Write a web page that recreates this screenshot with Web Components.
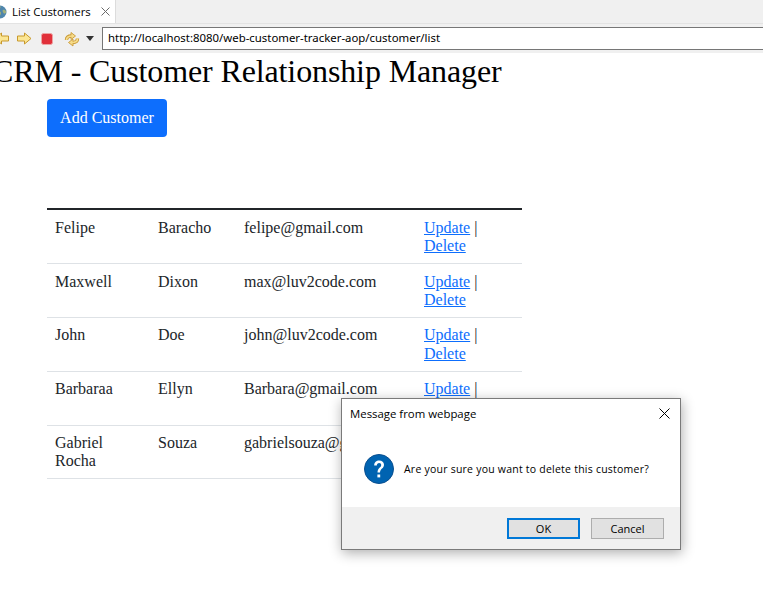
<!DOCTYPE html>
<html>
<head>
<meta charset="utf-8">
<title>List Customers</title>
<style>
    html, body { margin: 0; height: 100%; background: #fff; overflow: hidden; }
    body { font-family: "Liberation Serif", serif; color: #212529; }
</style>
</head>
<body>
<browser-bar url="http://localhost:8080/web-customer-tracker-aop/customer/list" tab="List Customers"></browser-bar>
<crm-page>
    <customer-table>
        <customer-row first="Felipe" last="Baracho" email="felipe@gmail.com"></customer-row>
        <customer-row first="Maxwell" last="Dixon" email="max@luv2code.com"></customer-row>
        <customer-row first="John" last="Doe" email="john@luv2code.com"></customer-row>
        <customer-row first="Barbaraa" last="Ellyn" email="Barbara@gmail.com"></customer-row>
        <customer-row first="Gabriel Rocha" last="Souza" email="gabrielsouza@gmail.com"></customer-row>
    </customer-table>
</crm-page>
<confirm-dialog title="Message from webpage" message="Are your sure you want to delete this customer?"></confirm-dialog>

<script>
(function () {
    const ARROW = "M.5 4h7V1l6.500 5.500-6.500 5.500V9h-7z";

    class BrowserBar extends HTMLElement {
        constructor() {
            super();
            const root = this.attachShadow({ mode: "open" });
            root.innerHTML = `
                <style>
                    :host { display: block; height: 53px; background: #f0f0f0; font-family: "Open Sans", "Noto Sans", sans-serif; color: #000; overflow: hidden; }
                    .tabs { display: flex; height: 24px; border-bottom: 1px solid #e3e3e3; box-sizing: border-box; }
                    .tab { width: 116px; flex: none; background: #fff; border-right: 1px solid #dcdcdc; box-sizing: border-box; display: flex; align-items: center; font-size: 11.4px; white-space: nowrap; }
                    .globe { flex: none; margin: 1px 5px 0 -7px; }
                    .close { flex: none; margin-left: 10px; }
                    .tools { display: flex; align-items: center; height: 29px; }
                    .icons { width: 102px; flex: none; display: flex; align-items: center; }
                    .icons svg { flex: none; }
                    .url { flex: 1; height: 23px; box-sizing: border-box; background: #fff; border: 1px solid #767676; border-right: 0; font-size: 11.4px; line-height: 20px; padding-left: 5px; font-family: "Noto Sans", sans-serif; white-space: nowrap; }
                </style>
                <div class="tabs">
                    <div class="tab">
                        <svg class="globe" width="14" height="14" viewBox="0 0 14 14"><circle cx="7" cy="7" r="6.500" fill="#4f86ad"/><path d="M2.500 3C4 1 6.500.8 7.500 1.500S6 3.500 5.500 5s2.500 1 2.500 3-1.500 3-2.500 3.500S3 10 3 8 1.500 4.500 2.500 3zM10 5c1-.5 2.500 0 3 1.500s-1 2.500-2 2-2-3-1-3.500z" fill="#a3b17a"/></svg>
                        <span class="label"></span>
                        <svg class="close" width="9" height="9" viewBox="0 0 9 9"><path d="M.5.5l8 8M8.500.5l-8 8" stroke="#6a6a6a" fill="none"/></svg>
                    </div>
                </div>
                <div class="tools">
                    <div class="icons">
                        <svg width="15" height="13" viewBox="0 0 15 13" style="margin-left:-6px;transform:scaleX(-1)"><path d="${ARROW}" fill="#fbe694" stroke="#c8992c"/></svg>
                        <svg width="15" height="13" viewBox="0 0 15 13" style="margin-left:8px"><path d="${ARROW}" fill="#fbe694" stroke="#c8992c"/></svg>
                        <svg width="12" height="12" viewBox="0 0 12 12" style="margin-left:9px"><rect x=".5" y=".5" width="11" height="11" rx="2" fill="#e1303a" stroke="#eda3a3"/></svg>
                        <svg width="16" height="16" viewBox="0 0 16 16" style="margin-left:11px">
                            <g fill="none" stroke="#c99a35" stroke-width="3.400"><path d="M2.500 9C2.500 6.500 4.500 5 7.500 5"/><path d="M13.500 7.500C13.500 10 11.500 11.500 8.500 11.500"/></g>
                            <path d="M7 1.500l4.500 3.500L7 8.500zM9 8l-4.500 3.500L9 15z" fill="#f7dc8a" stroke="#c99a35" stroke-width=".9"/>
                            <g fill="none" stroke="#f7dc8a" stroke-width="1.700"><path d="M2.500 9C2.500 6.500 4.500 5 8 5"/><path d="M13.500 7.500C13.500 10 11.500 11.500 8 11.500"/></g>
                        </svg>
                        <svg width="8" height="5" viewBox="0 0 8 5" style="margin-left:6px"><path d="M0 0h8L4 5z" fill="#333"/></svg>
                    </div>
                    <div class="url">${this.getAttribute("url")}</div>
                </div>`;
            root.querySelector(".label").textContent = this.getAttribute("tab");
        }
    }

    class CrmPage extends HTMLElement {
        constructor() {
            super();
            const root = this.attachShadow({ mode: "open" });
            root.innerHTML = `
                <style>
                    :host { display: block; font-family: "Liberation Serif", serif; }
                    h1 { margin: -1px 0 0 -8px; font-size: 32px; font-weight: 400; line-height: 38px; letter-spacing: -.12px; color: #000; white-space: nowrap; }
                    .body { padding: 9px 0 0 47px; }
                    .add { display: block; width: 120px; height: 38px; line-height: 38px; text-align: center; background: #0d6efd; color: #fff; border-radius: 4px; font-size: 16px; margin-bottom: 71px; }
                </style>
                <h1>CRM - Customer Relationship Manager</h1>
                <div class="body">
                    <a class="add">Add Customer</a>
                    <slot></slot>
                </div>`;
        }
    }

    class CustomerTable extends HTMLElement {
        constructor() {
            super();
            const root = this.attachShadow({ mode: "open" });
            root.innerHTML = `
                <style>
                    :host { display: block; width: 475px; border-top: 2px solid #212529; }
                </style>
                <slot></slot>`;
        }
    }

    class CustomerRow extends HTMLElement {
        constructor() {
            super();
            const root = this.attachShadow({ mode: "open" });
            root.innerHTML = `
                <style>
                    :host { display: grid; grid-template-columns: 103px 86px 180px 106px; height: 54px; box-sizing: border-box; border-bottom: 1px solid #dee2e6; font-size: 16px; line-height: 18.4px; color: #212529; }
                    :host(:last-child) { height: 53px; }
                    div { padding: 9px 8px 0; }
                    :host(:nth-child(n+3)) div { padding-top: 8.4px; }
                    :host(:last-child) div { padding-top: 8px; }
                    a { color: #0d6efd; text-decoration: underline; }
                </style>
                <div class="first"></div><div class="last"></div><div class="email"></div>
                <div><a>Update</a> | <a>Delete</a></div>`;
            root.querySelector(".first").textContent = this.getAttribute("first");
            root.querySelector(".last").textContent = this.getAttribute("last");
            root.querySelector(".email").textContent = this.getAttribute("email");
        }
    }

    class ConfirmDialog extends HTMLElement {
        constructor() {
            super();
            const root = this.attachShadow({ mode: "open" });
            root.innerHTML = `
                <style>
                    :host { position: absolute; left: 341px; top: 398px; width: 340px; height: 152px; box-sizing: border-box; background: #fff; border: 1px solid #7a7a7a; box-shadow: 1px 3px 12px rgba(0,0,0,.32); display: flex; flex-direction: column; font-family: "Open Sans", "Noto Sans", sans-serif; color: #000; }
                    .head { height: 29px; display: flex; align-items: center; justify-content: space-between; padding: 0 10px 0 8px; font-size: 11.400px; }
                    .msg { flex: 1; display: flex; align-items: center; gap: 10px; padding: 2px 0 0 22px; font-size: 10.500px; letter-spacing: .23px; }
                    .foot { height: 42px; background: #f0f0f0; display: flex; justify-content: flex-end; gap: 11px; padding: 11px 16px 0 0; box-sizing: border-box; }
                    .btn { width: 73px; height: 21px; box-sizing: border-box; background: #e1e1e1; border: 1px solid #adadad; text-align: center; line-height: 19px; font-size: 11px; }
                    .btn.ok { border: 2px solid #0078d7; line-height: 17px; }
                </style>
                <div class="head">
                    <span class="title"></span>
                    <svg width="11" height="11" viewBox="0 0 11 11"><path d="M.5.5l10 10M10.500.5l-10 10" stroke="#000" fill="none"/></svg>
                </div>
                <div class="msg">
                    <svg width="30" height="30" viewBox="0 0 30 30"><circle cx="15" cy="15" r="14.500" fill="#0063b1" stroke="#0a4f8f"/><path d="M10.200 11.500c0-3.200 2.200-5 5-5s4.800 1.700 4.800 4.200c0 3.900-4 3.800-4 7.800h-2.500c0-5 3.700-4.800 3.700-7.600 0-1.200-.8-2-2.100-2s-2.200.9-2.300 2.600z" fill="#fff"/><rect x="13.400" y="20.500" width="2.800" height="2.900" fill="#fff"/></svg>
                    <span class="text"></span>
                </div>
                <div class="foot">
                    <div class="btn ok">OK</div>
                    <div class="btn">Cancel</div>
                </div>`;
            root.querySelector(".title").textContent = this.getAttribute("title");
            root.querySelector(".text").textContent = this.getAttribute("message");
        }
    }

    customElements.define("browser-bar", BrowserBar);
    customElements.define("crm-page", CrmPage);
    customElements.define("customer-table", CustomerTable);
    customElements.define("customer-row", CustomerRow);
    customElements.define("confirm-dialog", ConfirmDialog);
})();
</script>
</body>
</html>
